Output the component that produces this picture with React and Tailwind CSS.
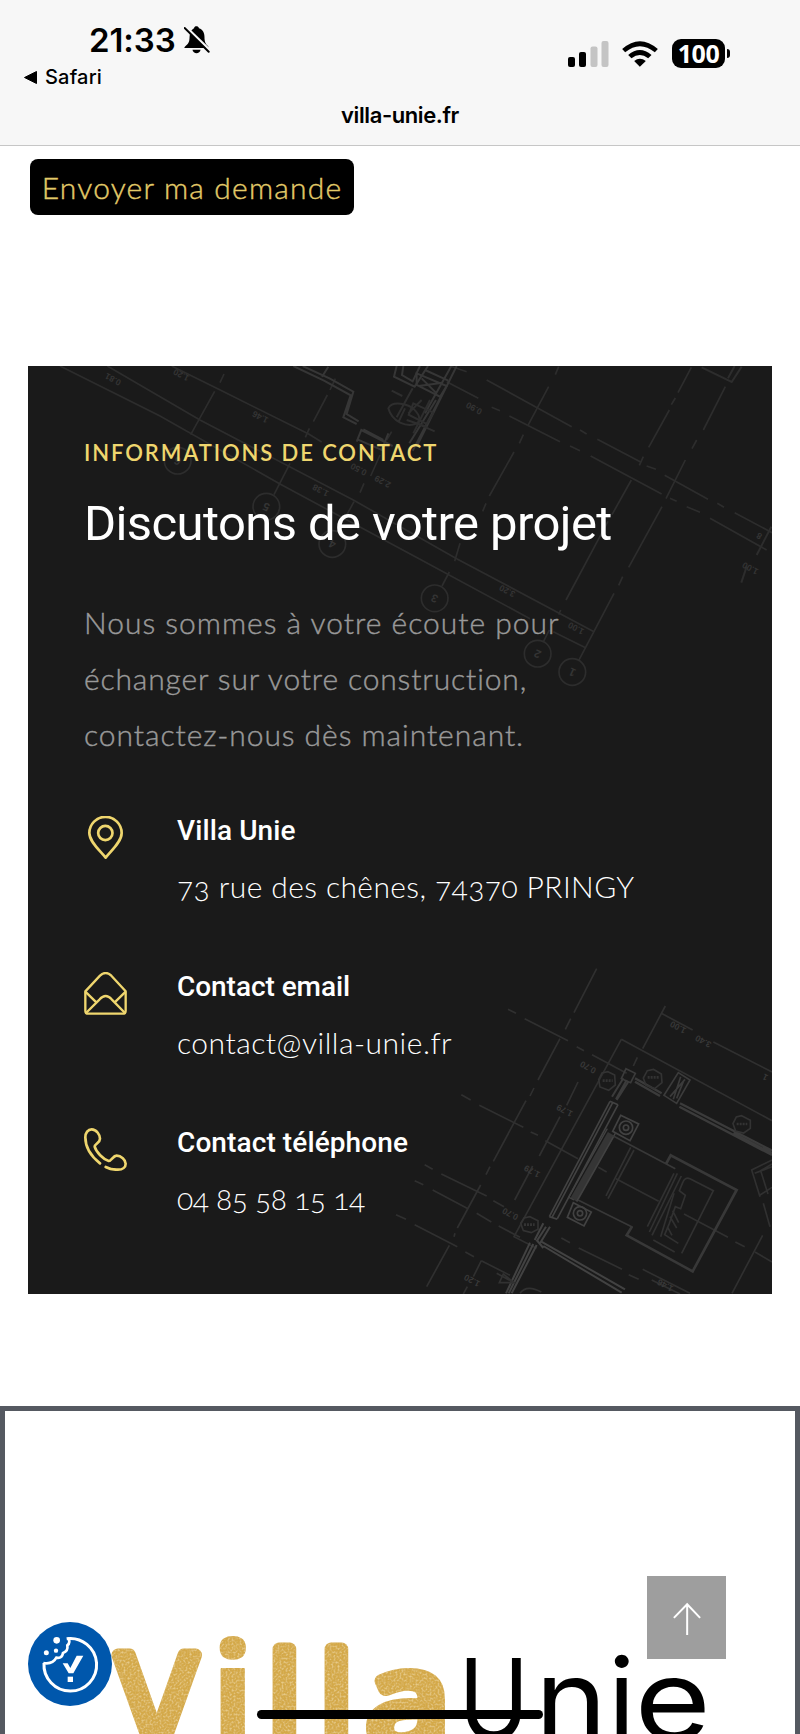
import React from "react";

const GOLD = "#efd66e";

const BellOff = () => (
  <svg className="w-[26px] h-[28px]" viewBox="552 78 80 86">
    <path
      d="M553 146c0-6 12-10 15-22 2-8 0-20 5-29 3-6 7-8 10-10 1-8 13-8 15 0 12 4 17 14 17 26 0 17 4 22 10 28 3 3 3 7 0 7z"
      fill="#000"
    />
    <path d="M578 151h25c-2 14-23 14-25 0z" fill="#000" />
    <path d="M556 79l76 74" stroke="#f7f7f7" strokeWidth="8" />
    <path d="M554 84l74 73" stroke="#000" strokeWidth="6" strokeLinecap="round" />
  </svg>
);

const StatusIcons = () => (
  <div className="flex items-start pt-[19px]">
    <svg className="w-[41px] h-[26px] mt-[2px]" viewBox="0 0 41 26">
      <rect x="0" y="16" width="7" height="10" rx="2" fill="#000" />
      <rect x="11" y="11" width="7" height="15" rx="2" fill="#000" />
      <rect x="22.500" y="5.500" width="7" height="20.500" rx="2" fill="#c4c4c4" />
      <rect x="33.500" y="0" width="7" height="26" rx="2" fill="#c4c4c4" />
    </svg>
    <svg className="w-[36px] h-[26px] ml-[13px] mt-[2px]" viewBox="668 122 107 78">
      <path d="M668 146q53-47 107 0l-9 10q-45-37-89 0z" fill="#000" />
      <path d="M686 164q35-30 70 0l-10 10q-25-20-50 0z" fill="#000" />
      <path d="M704 182q17-14 35 0l-18 17z" fill="#000" />
    </svg>
    <div className="ml-[14px] w-[53px] h-[29px] rounded-[9px] bg-black text-white text-[25px] font-bold leading-[29px] text-center tracking-[-0.500px] font-['Noto_Sans',sans-serif]">
      100
    </div>
    <div className="w-[3px] h-[9px] ml-[2px] mt-[10px] rounded-r-full bg-black" />
  </div>
);

const Header = () => (
  <header className="h-[146px] bg-[#f7f7f7] border-b border-[#c6c6c6] pt-[20px] font-[Inter,sans-serif] text-black">
    <div className="flex justify-between h-[40px] pl-[89px] pr-[70px]">
      <div className="flex">
        <span className="w-[95px] text-[33px] leading-[40px] font-semibold tracking-[-0.100px]">21:33</span>
        <div className="pt-[6px]">
          <BellOff />
        </div>
      </div>
      <StatusIcons />
    </div>
    <div className="mt-[5px] pl-[24px] flex items-center gap-[8px] h-[24px]">
      <svg className="w-[13px] h-[13px]" viewBox="0 0 13 13">
        <path d="M0.500 6.500L12.500 0.500V12.500z" fill="#000" stroke="#000" strokeLinejoin="round" />
      </svg>
      <span className="text-[20px] leading-[24px] font-medium tracking-[0.200px]">Safari</span>
    </div>
    <p className="mt-[12px] text-center text-[22px] leading-[28px] font-semibold tracking-[-0.400px]">villa-unie.fr</p>
  </header>
);

const dims = [
  [283, 50, "0.81"],
  [488, 37, "1.20"],
  [725, 163, "1.46"],
  [906, 383, "1.38"],
  [1020, 320, "0.50"],
  [1092, 357, "2.29"],
  [1366, 137, "0.90"],
  [1466, 685, "3.20"],
  [1672, 797, "1.00"],
  [2195, 617, "1.00"],
  [2222, 520, "8"],
];

const bubbles = [
  [473, 302, "6"],
  [739, 440, "5"],
  [937, 552, "4"],
  [1244, 715, "3"],
  [1553, 881, "2"],
  [1657, 936, "1"],
];

const PlanTop = () => (
  <g transform="translate(20 360) scale(.33333)" strokeWidth="5">
    <path d="M120 18L420 168L780 372L1200 598L1530 776M1600 815L1698 864" />
    <path d="M262 18L540 180L1000 420L1310 596L1722 815" />
    <path d="M455 18L590 85L866 222L905 246" />
    <path d="M1280 65L1375 115M1415 142L1440 152M1468 168L1620 245M1650 258L1680 272M1712 288L1925 402M1950 415L1970 424M2000 440L2040 457M2070 475L2240 570" />
    <path d="M1290 18L1340 35M1400 60L1655 200M1680 210L1700 222M1732 238L1862 306M1880 318L1908 328M1934 346L2064 418M2092 430L2112 442M2144 458L2256 518" />
    <path d="M612 42L600 68M584 94L512 224M946 56L930 90M922 105L880 185M868 205L856 232M810 310L762 404M1032 370L1020 398M1002 425L972 480M1115 215L1100 240M1080 285L1052 348" />
    <path d="M1616 20L1606 44M1586 80L1524 196M1510 224L1498 250M1482 276L1408 408M1398 430L1388 454M1320 550L1304 604M1288 636L1266 678" />
    <path d="M2014 22L1974 98M1966 114L1954 134M1948 150L1886 262M1870 290L1858 316M1834 360L1776 464M1764 484L1638 720M1622 750L1616 764M1588 810L1570 846" />
    <path d="M2116 80L2050 210M2030 240L2016 266M1996 300L1938 416M1926 440L1826 622M1808 650L1796 676M1782 700L1676 902" />
    <path d="M2045 22L2135 66L2165 20M2124 55L2144 18M2254 500L2210 585M2180 620L2164 668" strokeWidth="6" />
    <g stroke="#363636" strokeWidth="6">
      <path d="M820 18L912 62L992 106L970 172L1010 192M848 18L930 56L1000 95L980 162L1016 184" />
      <path d="M1010 245L1024 210L1118 258M1030 208L1090 240M906 50L925 20M1012 238L1085 270L1105 220" />
      <path d="M1130 18L1122 50L1184 80L1224 18M1150 18L1146 45L1178 64L1200 18" />
      <path d="M1190 40L1280 78L1260 110L1190 75zM1215 30L1285 62M1205 55L1250 100M1268 68L1196 78" />
      <path d="M1310 18L1190 260M1294 18L1215 160M1268 100L1178 272M1248 120L1168 250" />
      <g stroke="#2e2e2e">
        <path d="M1105 145c12-24 60-14 78 4s22 38 0 44-66-4-78-48zM1155 145l-20 42M1165 160l40-40M1160 180l60 20M1230 120l-50 100" />
        <path d="M1115 92l32 16M1180 130l60 28-20 34-54-28zM1178 85L1130 172M1190 190l54 24" />
      </g>
    </g>
    {bubbles.map(([x, y, n]) => (
      <g key={n}>
        <circle cx={x} cy={y} r="40" />
        <text
          x={x}
          y={y}
          dy="11"
          transform={`rotate(205 ${x} ${y})`}
          textAnchor="middle"
          fontSize="34"
          fontWeight="bold"
          fill="#343434"
          stroke="none"
        >
          {n}
        </text>
      </g>
    ))}
    {dims.map(([x, y, t]) => (
      <text
        key={`${x}-${y}`}
        x={x}
        y={y}
        transform={`rotate(208 ${x} ${y})`}
        textAnchor="middle"
        fontSize="26"
        fontWeight="bold"
        fill="#343434"
        stroke="none"
      >
        {t}
      </text>
    ))}
  </g>
);

const lowDims = [
  [898, 254, "1.00"],
  [974, 296, "3.40"],
  [628, 374, "0.70"],
  [558, 504, "1.79"],
  [460, 686, "1.79"],
  [395, 814, "0.70"],
  [280, 1014, "1.20"],
  [860, 1028, "1.46"],
  [1160, 404, "1"],
];

const PlanBottom = () => (
  <g transform="translate(380 940) scale(.33333)" strokeWidth="5" stroke="#303030">
    <path d="M650 86L582 218M572 236L556 268M540 296L474 420M462 444L450 468M438 482L340 664M330 680L318 704M302 735L232 864M225 880L222 890M208 916L140 1040" />
    <path d="M384 208L408 220M434 236L564 302M590 320L612 332M636 344L740 400" />
    <path d="M244 464L272 480M298 496L430 562M452 576L474 586M496 602L594 656M655 682L680 696M708 716L836 784M912 822L1044 892M1066 906L1094 920M1125 936L1176 966" />
    <path d="M134 674L158 688M184 702L320 768M340 782L372 800M104 722L130 734M158 750L264 806M290 820L334 846M356 858L420 892M48 824L78 838M104 854L232 920M256 936L282 950M304 962L390 1006" />
    <path d="M544 894L570 908M596 924L726 988M746 1004L776 1018M788 988L930 1060M815 1020L900 1062" />
    <path d="M594 426L560 496M540 530L478 648M458 678L404 780M304 962L280 1010M262 1040L250 1062" />
    <path d="M856 198L788 326M772 352L760 378M844 220L938 270M1000 306L1176 396M724 298L1176 542M724 298L402 890L470 925" />
    <path d="M1148 886L1056 1060M1176 660L1115 690L1140 770M1176 680L1124 700M1176 742L1140 765M1150 790L1170 860M1176 672l-34 20 22 70" />
    <g stroke="#3b3b3b">
      <path d="M765 415L845 460M765 425L840 468M900 490L1176 632M898 500L1176 645M1060 580L1176 640" strokeWidth="7" />
      <path d="M895 398L930 420L890 490L852 466zM902 410L880 478M915 418L870 470M910 425l-20 50M738 386l28 14-14 28-28-12z" />
      <path d="M820 388l24 14 2 26-22 18-26-10-8-22 12-22zM1085 527l26 14v24l-20 14-24-6-8-22 10-20z" stroke="#333" />
      <path d="M684 395l20 10 2 30-20 16-26-10-4-22 10-20zM450 830l24 12v26l-20 10-24-6-8-22 10-16z" stroke="#333" />
      <path d="M803 412h34M1070 552h32M668 422h30M432 854h32" stroke="#333" strokeWidth="8" strokeDasharray="6 3" />
      <path d="M745 425L710 480M730 415L696 470M740 420l-32 58" strokeWidth="6" />
    </g>
    <g stroke="#424242">
      <path d="M690 484L508 830M714 494L532 836M698 488L516 832M508 830L532 838M690 484L714 494" />
      <path d="M694 582L582 780" strokeWidth="24" stroke="#353535" />
      <path d="M682 566L566 772L582 780M706 580L590 784" strokeWidth="4" />
      <path d="M510 860L480 910M490 850L464 900M470 915L395 1060M450 908L378 1060M460 912L386 1060M498 860L470 904" strokeWidth="6" />
      <path d="M484 905L735 1048M490 918L725 1058M470 900l20 24" strokeWidth="6" />
      <path d="M722 526L776 552L750 602L698 574zM580 788L634 816L612 858L562 832z" />
      <circle cx="738" cy="563" r="20" />
      <circle cx="738" cy="563" r="8" />
      <circle cx="600" cy="820" r="20" />
      <circle cx="600" cy="820" r="8" />
    </g>
    <g stroke="#383838">
      <path d="M700 588L886 686M594 780L758 862" />
      <path d="M858 672L872 646L1070 750L938 994L740 886L756 860" strokeWidth="8" />
      <g stroke="#313131">
        <path d="M752 622L678 768M762 630L684 776M892 700L808 876M904 708L816 886M882 700l-80 160M820 900L884 936" />
        <path d="M905 940L1000 752L930 716Q914 710 908 728L898 752L916 766L902 806L886 800L868 850L854 884L895 910M870 830l20 34M878 812l18 36M862 860l14 26M882 760l-40 130" />
        <path d="M358 1028l12-26 32 26zM420 1060q20-28 64-4M350 1000l56 30" />
      </g>
    </g>
    {lowDims.map(([x, y, t]) => (
      <text
        key={`${x}-${y}`}
        x={x}
        y={y}
        transform={`rotate(208 ${x} ${y})`}
        textAnchor="middle"
        fontSize="26"
        fontWeight="bold"
        fill="#383838"
        stroke="none"
      >
        {t}
      </text>
    ))}
  </g>
);

const Blueprint = () => (
  <svg
    className="absolute inset-0 w-full h-full font-['Liberation_Sans',sans-serif]"
    viewBox="28 366 744 928"
    fill="none"
    stroke="#2d2d2d"
  >
    <PlanTop />
    <PlanBottom />
  </svg>
);

const PinIcon = () => (
  <svg className="w-[43px] h-[43px]" viewBox="71 78 129 129" fill="none" stroke={GOLD} strokeWidth="8">
    <path d="M136 203C119 182 87 155 87 129a48.500 48.500 0 0 1 97 0c0 26-31 53-48 74z" strokeLinejoin="round" />
    <circle cx="135" cy="129" r="21.500" />
  </svg>
);

const MailIcon = () => (
  <svg className="w-[43px] h-[43px]" viewBox="71 546 129 129" fill="none" stroke={GOLD} strokeWidth="7" strokeLinejoin="round">
    <path d="M75 604L119 557Q136 541 153 557L196 604V662Q196 671 187 671H84Q75 671 75 662z" />
    <path d="M75 605L108 637M196 605L163 637M77 669L118 628Q136 608 154 628L194 669" />
  </svg>
);

const PhoneIcon = () => (
  <svg
    className="w-[43px] h-[43px]"
    viewBox="71 1015 129 129"
    fill="none"
    stroke={GOLD}
    strokeWidth="8"
    strokeLinecap="round"
    strokeLinejoin="round"
  >
    <path d="M119 1121C92 1100 75 1072 75 1043C75 1029 83 1019 94 1019C108 1019 119 1035 119 1047C119 1060 103 1062 103 1071C107 1087 129 1109 145 1114C153 1115 158 1098 169 1098C182 1098 196 1110 196 1122C196 1133 187 1140 173 1140Q153 1141 136 1132" />
  </svg>
);

const contacts = [
  {
    icon: PinIcon,
    title: "Villa Unie",
    text: "73 rue des chênes, 74370 PRINGY",
    titleClass: "tracking-[0.100px]",
    textClass: "tracking-[0.400px]",
  },
  {
    icon: MailIcon,
    title: "Contact email",
    text: "contact@villa-unie.fr",
    titleClass: "tracking-[-0.050px]",
    textClass: "tracking-[0.500px]",
  },
  {
    icon: PhoneIcon,
    title: "Contact téléphone",
    text: "04 85 58 15 14",
    titleClass: "tracking-[0.100px]",
    textClass: "tracking-[-0.500px]",
  },
];

const ContactCard = () => (
  <section className="relative mt-[151px] mx-[28px] h-[928px] bg-[#1a1a1a] overflow-hidden">
    <Blueprint />
    <div className="relative pt-[72px] pl-[56px]">
      <p className="text-[22px] leading-[30px] font-semibold tracking-[1.900px] whitespace-nowrap text-[#efd66e] font-[Lato,sans-serif]">
        INFORMATIONS DE CONTACT
      </p>
      <h2 className="mt-[26px] text-[49px] leading-[60px] font-normal whitespace-nowrap tracking-[-0.600px] text-white font-[Roboto,sans-serif]">
        Discutons de votre projet
      </h2>
      <p className="mt-[40px] text-[30px] leading-[56px] font-light whitespace-nowrap text-[#999] [-webkit-text-stroke:0.4px_#999] font-[Lato,sans-serif]">
        <span className="block tracking-[1px]">Nous sommes à votre écoute pour</span>
        <span className="block tracking-[0.850px]">échanger sur votre construction,</span>
        <span className="block tracking-[0.950px]">contactez-nous dès maintenant.</span>
      </p>
      <ul className="mt-[49px] flex flex-col gap-[60px]">
        {contacts.map(({ icon: Icon, title, text, titleClass, textClass }) => (
          <li key={title} className="flex gap-[50px] h-24">
            <div className="pt-[5px]">
              <Icon />
            </div>
            <div className="whitespace-nowrap text-white">
              <h3 className={`text-[28px] leading-[40px] font-medium font-[Roboto,sans-serif] ${titleClass}`}>{title}</h3>
              <p className={`mt-[15px] text-[30px] leading-[40px] font-light oldstyle-nums font-[Lato,sans-serif] ${textClass}`}>
                {text}
              </p>
            </div>
          </li>
        ))}
      </ul>
    </div>
  </section>
);

const villa = [
  { letter: "V", transform: "translate(118 1748)", size: 130, stroke: 13, className: "font-normal" },
  { letter: "i", transform: "translate(210 1750)", size: 149, stroke: 2, className: "font-bold" },
  { letter: "l", transform: "translate(268 1748)", size: 130, stroke: 13, className: "font-normal" },
  { letter: "l", transform: "translate(320 1748)", size: 130, stroke: 13, className: "font-normal" },
  { letter: "a", transform: "translate(367 1747) scale(1.120 1)", size: 132, stroke: 14, className: "font-normal" },
];

const unie = [
  ["U", "translate(458.5 1740) scale(.84 1)"],
  ["n", "translate(535 1740) scale(1.08 1)"],
  ["i", "translate(608 1740)"],
  ["e", "translate(634.5 1740) scale(1.16 1)"],
];

const Logo = () => (
  <svg className="absolute left-[100px] bottom-0 w-[640px] h-[114px]" viewBox="100 1620 640 114">
    <defs>
      <filter id="grain" x="100" y="1620" width="360" height="130" filterUnits="userSpaceOnUse">
        <feTurbulence type="fractalNoise" baseFrequency=".5" numOctaves="2" result="noise" />
        <feColorMatrix
          in="noise"
          type="matrix"
          values="0 0 0 0 1  0 0 0 0 .88  0 0 0 0 .5  1.1 0 0 0 -.48"
          result="specks"
        />
        <feComposite in="specks" in2="SourceGraphic" operator="in" result="cut" />
        <feMerge>
          <feMergeNode in="SourceGraphic" />
          <feMergeNode in="cut" />
        </feMerge>
      </filter>
    </defs>
    <g filter="url(#grain)" fill="#d4a94a" stroke="#d4a94a" strokeLinejoin="round" className="font-['Open_Sans',sans-serif]">
      {villa.map(({ letter, transform, size, stroke, className }) => (
        <text key={transform} transform={transform} fontSize={size} strokeWidth={stroke} className={className}>
          {letter}
        </text>
      ))}
    </g>
    {unie.map(([letter, transform]) => (
      <text key={letter} transform={transform} fontSize="113" fill="#000" className="font-[Inter,sans-serif]">
        {letter}
      </text>
    ))}
  </svg>
);

const CookieButton = () => (
  <button className="absolute left-[28px] bottom-[28px] w-[84px] h-[84px]">
    <svg className="w-full h-full" viewBox="84 696 252 252">
      <circle cx="210" cy="822" r="126" fill="#0057ac" />
      <g fill="none" stroke="#fff" strokeWidth="9">
        <path d="M200 746A79 79 0 1 1 132 819" />
        <path d="M204 743Q213 758 202 766Q205 784 189 789Q186 806 169 803Q158 824 130 819" strokeWidth="8" />
      </g>
      <g fill="#fff">
        <circle cx="170" cy="751" r="10" />
        <circle cx="168" cy="782" r="6.500" />
        <circle cx="139" cy="788" r="7.500" />
        <path d="M188 820H203L211 834L230 797H250L220 850H206z" />
        <rect x="203" y="860" width="16" height="16" />
      </g>
    </svg>
  </button>
);

const ScrollTop = () => (
  <button className="absolute left-[647px] bottom-[75px] w-[79px] h-[83px] bg-[#9e9e9e]">
    <svg className="w-full h-full" viewBox="742 558 236 250" fill="none" stroke="#fff" strokeWidth="6">
      <path d="M862 736V642M822 684L862 643L901 684" />
    </svg>
  </button>
);

const App = () => {
  return (
    <div className="relative w-[800px] h-[1734px] overflow-hidden bg-white">
      <Header />
      <button className="block mt-[13px] ml-[30px] w-[324px] h-[56px] pb-[1px] rounded-[8px] bg-black text-[#e3cb69] text-[30px] leading-[54px] font-light whitespace-nowrap tracking-[1.200px] [-webkit-text-stroke:0.4px_#e3cb69] font-[Lato,sans-serif]">
        Envoyer ma demande
      </button>
      <ContactCard />
      <div className="mt-[112px] h-[400px] border-[5px] border-[#555961]" />
      <Logo />
      <ScrollTop />
      <CookieButton />
      <div className="absolute left-[257px] bottom-[15px] w-[286px] h-[9px] rounded-full bg-black" />
    </div>
  );
};

export default App;
